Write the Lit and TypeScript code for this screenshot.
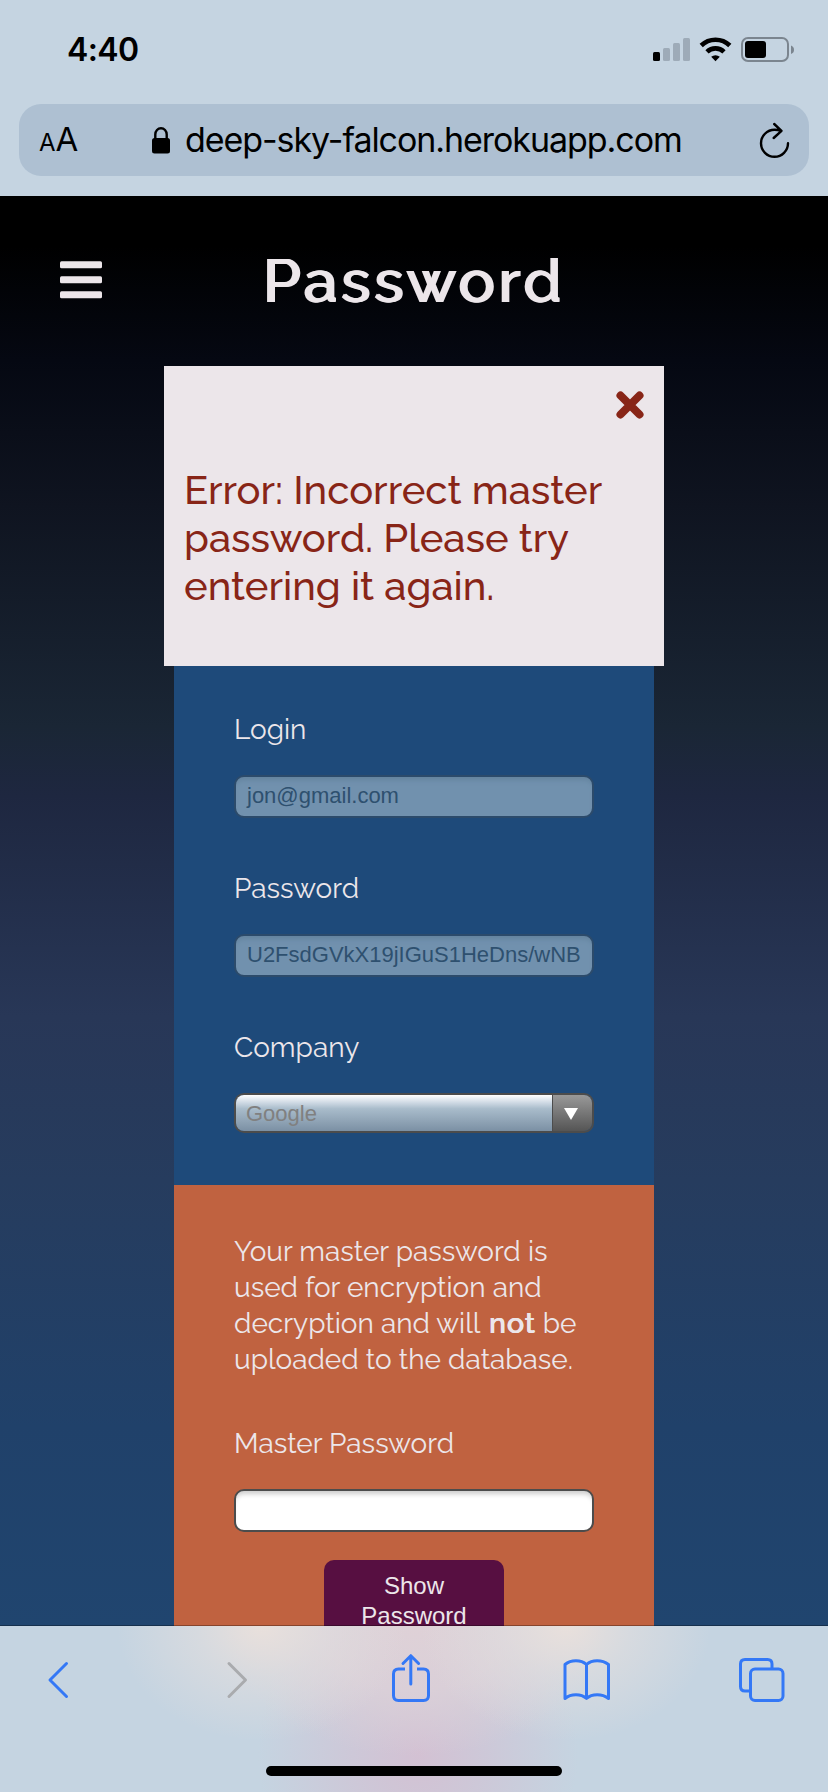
import { LitElement, html, css } from "lit";
import { customElement } from "lit/decorators.js";

@customElement("app-root")
export class AppRoot extends LitElement {
  static styles = css`
    :host { display: flex; flex-direction: column; width: 828px; height: 1792px; overflow: hidden; background: #c5d4e1; }
    * { box-sizing: border-box; }
    svg { display: block; flex: none; }
    .status { height: 104px; flex: none; display: flex; justify-content: space-between; align-items: flex-start; padding: 30px 34px 0 67px; font: 600 32px/40px Inter, "Liberation Sans", sans-serif; letter-spacing: -0.6px; color: #000; }
    .signals { margin-top: 6px; }
    .address { height: 72px; flex: none; margin: 0 19px 20px; border-radius: 22px; background: #aec0d2; display: flex; align-items: center; font-family: Inter, "Liberation Sans", sans-serif; color: #000; padding-left: 20px; }
    .aa { display: flex; align-items: baseline; width: 113px; line-height: 40px; padding-top: 2px; }
    .small { font-size: 24px; }
    .big { font-size: 33px; }
    .url { font-size: 34px; line-height: 40px; letter-spacing: -1.06px; margin-left: 15px; width: 500px; white-space: nowrap; }
    .reload { margin-left: 74px; }
    .page { height: 1430px; flex: none; overflow: hidden; background: linear-gradient(#000 0, #000 50px, #050812 164px, #0f1420 310px, #1a2635 530px, #1e2740 600px, #283757 820px, #263c5e 985px, #20416a 1231px, #20456f 1430px); font-family: Raleway, Lato, "Liberation Sans", sans-serif; color: #ece6ea; display: flex; flex-direction: column; align-items: center; }
    .header { width: 828px; height: 170px; flex: none; display: flex; align-items: flex-start; padding: 65px 0 0 60px; }
    .title { margin: -16px 0 0 160px; font-size: 60px; line-height: 72px; font-weight: 500; letter-spacing: 3.84px; white-space: nowrap; text-shadow: 1.2px 0 currentColor, 2.4px 0 currentColor; }
    .alert { width: 500px; height: 300px; flex: none; background: #ece6ea; color: #882517; padding: 25px 20px 0; display: flex; flex-direction: column; }
    .close { align-self: flex-end; }
    .message { margin-top: 47px; font-size: 40px; line-height: 48px; font-weight: 500; }
    .line { white-space: nowrap; width: max-content; }
    .panel { width: 480px; flex: none; padding: 0 60px; font-size: 28px; line-height: 36px; font-weight: 400; }
    .entry { height: 519px; background: #1e4a7a; padding-top: 46px; }
    .master { height: 600px; background: #c06240; padding-top: 49px; display: flex; flex-direction: column; }
    .field { height: 159px; }
    .box { height: 43px; flex: none; margin-top: 27px; border: 2px solid #4c4c4c; border-radius: 10px; background: #fff; box-shadow: inset 0 6px 5px -3px #ccc; font: 22px/37px "Liberation Sans", Arial, sans-serif; padding-left: 11px; white-space: nowrap; overflow: hidden; }
    .off { background: #7191ae; border-color: #2c4b6b; color: #2e506f; box-shadow: inset 0 6px 5px -3px #64849f; }
    .select { height: 40px; display: flex; margin-top: 27px; border: 2px solid #4c4c4c; border-radius: 10px; overflow: hidden; font: 22px/37px "Liberation Sans", Arial, sans-serif; color: #808080; }
    .value { width: 316px; padding-left: 10px; background: linear-gradient(#fff, #cdd8e3 22%, #a9bccb 38%, #7b90a4); }
    .arrow { width: 40px; border-left: 1px solid #4c4c4c; background: linear-gradient(#999, #555); padding: 13px 0 0 11px; }
    .ml { margin-top: 48px; }
    b { font-weight: 500; letter-spacing: 1.35px; margin-left: 2px; text-shadow: 0.6px 0 currentColor, 1.2px 0 currentColor; }
    .btn { width: 180px; height: 90px; flex: none; align-self: center; margin-top: 28px; border-radius: 10px; background: #570f41; font: 24px/30px "Liberation Sans", Arial, sans-serif; padding-top: 11px; display: flex; flex-direction: column; align-items: center; }
    .tools { height: 166px; flex: none; position: relative; box-shadow: 0 -1px 0 rgba(0,0,0,.3); display: flex; flex-direction: column; justify-content: space-between; align-items: center; padding: 26px 0 16px;
      background:
        radial-gradient(ellipse 145px 115px at 262px 0, rgba(233,224,220,1), rgba(226,222,222,.6) 45%, rgba(220,220,225,0)),
        radial-gradient(ellipse 145px 115px at 566px 0, rgba(233,224,220,1), rgba(226,222,222,.6) 45%, rgba(220,220,225,0)),
        radial-gradient(ellipse 190px 130px at 414px 0, rgba(223,209,215,1), rgba(221,209,216,.8) 50%, rgba(218,210,219,0)),
        radial-gradient(ellipse 160px 180px at 418px 128px, rgba(211,193,211,1), rgba(208,196,213,.7) 45%, rgba(204,203,219,0)),
        #c5d4e1; }
    .icons { width: 828px; height: 52px; padding-left: 46px; display: flex; fill: none; stroke: #3478f6; stroke-width: 3; stroke-linecap: round; stroke-linejoin: round; }
    .fwd { margin-left: 155px; stroke: #a9abae; }
    .share { margin-left: 141px; }
    .book { margin-left: 131px; }
    .tabs { margin-left: 127px; }
    .home { width: 296px; height: 10px; border-radius: 5px; background: #000; }
  `;
  render() {
    return html`
      <div class="status"><span>4:40</span>
        <svg class="signals" width="141" height="27" viewBox="653 36 141 27">
          <rect x="653" y="52" width="7" height="9" rx="1.500"/>
          <g fill="#9eabb8"><rect x="663" y="48" width="7" height="13" rx="1.500"/><rect x="673" y="43" width="7" height="18" rx="1.500"/><rect x="683" y="38" width="7" height="23" rx="1.500"/></g>
          <g fill="none" stroke="#000" stroke-width="4.600"><path d="M701.200 45.500a20.500 20.500 0 0 1 28.600 0"/><path d="M707 51.800a12.200 12.200 0 0 1 17 0"/></g>
          <path d="M711.200 56.800a6.400 6.400 0 0 1 8.600 0l-4.300 4.400z"/>
          <rect x="742" y="38" width="46" height="23" rx="6" fill="none" stroke="#7b858f" stroke-width="2"/>
          <rect x="745" y="41" width="21" height="17" rx="3"/><path d="M791 45.500q3 1.200 3 4.300t-3 4.300z" fill="#7b858f"/>
        </svg></div>
      <div class="address"><div class="aa"><span class="small">A</span><span class="big">A</span></div>
        <svg width="18" height="27" viewBox="0 0 18 27"><rect y="11" width="18" height="15.500" rx="2.500"/><path d="M3.300 12V7.500a5.700 6.300 0 0 1 11.400 0V12" fill="none" stroke="#000" stroke-width="2.400"/></svg>
        <span class="url">deep-sky-falcon.herokuapp.com</span>
        <svg class="reload" width="32" height="38" viewBox="759 121 32 38" fill="none" stroke="#000" stroke-width="2.400" stroke-linecap="round" stroke-linejoin="round"><path d="M788 143.300A13.500 13.500 0 1 1 774.500 129.800Q778 129.800 781 130.800M774.200 124l7.300 6.800-7.800 7.200"/></svg></div>
      <div class="page">
        <div class="header"><svg width="42" height="38" fill="#ece6ea"><rect y=".3" width="42" height="7" rx="1.500"/><rect y="15.300" width="42" height="7" rx="1.500"/><rect y="30.300" width="42" height="7" rx="1.500"/></svg><div class="title">Password</div></div>
        <div class="alert"><svg class="close" width="28" height="28" stroke="#882517" stroke-width="8" stroke-linecap="round"><path d="M4.500 4.500L23.500 23.500M23.500 4.500L4.500 23.500"/></svg>
          <div class="message"><div class="line">Error: Incorrect master</div><div class="line">password. Please try</div><div class="line">entering it again.</div></div></div>
        <div class="panel entry">
          <div class="field"><div class="line">Login</div><div class="box off">jon@gmail.com</div></div>
          <div class="field"><div class="line">Password</div><div class="box off">U2FsdGVkX19jIGuS1HeDns/wNB</div></div>
          <div class="field"><div class="line">Company</div><div class="select"><div class="value">Google</div><div class="arrow"><svg width="14" height="12"><path d="M0 0H14L7 12Z" fill="#fff"/></svg></div></div></div>
        </div>
        <div class="panel master">
          <div class="line">Your master password is</div><div class="line">used for encryption and</div><div class="line">decryption and will <b>not</b> be</div><div class="line">uploaded to the database.</div>
          <div class="line ml">Master Password</div><div class="box"></div>
          <div class="btn"><span>Show</span><span>Password</span></div>
        </div>
      </div>
      <div class="tools">
        <div class="icons">
          <svg width="24" height="52" viewBox="46 1652 24 52"><path d="M66.500 1663.500L50 1680L66.500 1696.500"/></svg>
          <svg class="fwd" width="24" height="52" viewBox="225 1652 24 52"><path d="M229 1663.500L245.500 1680L229 1696.500"/></svg>
          <svg class="share" width="42" height="52" viewBox="390 1652 42 52"><path stroke-linecap="butt" d="M405 1669H398.500Q393.500 1669 393.500 1674V1695.500Q393.500 1700.500 398.500 1700.500H423.500Q428.500 1700.500 428.500 1695.500V1674Q428.500 1669 423.500 1669H417"/><path d="M410.800 1684V1656M403 1663.500L410.800 1655.700L418.600 1663.500"/></svg>
          <svg class="book" width="48" height="52" viewBox="563 1652 48 52"><path d="M586.500 1698V1664.500C581 1659.500 571 1659.500 565 1664.500V1698.500C571 1693.500 581 1693.500 586.500 1698.500C592 1693.500 602 1693.500 608.500 1698.500V1664.500C602 1659.500 592 1659.500 586.500 1664.500"/></svg>
          <svg class="tabs" width="48" height="52" viewBox="738 1652 48 52"><rect x="750.500" y="1669" width="32.500" height="31.500" rx="4.500"/><path stroke-linecap="butt" d="M750 1691H745Q740.500 1691 740.500 1686.500V1664Q740.500 1659.500 745 1659.500H767.500Q772 1659.500 772 1664V1668"/></svg>
        </div>
        <div class="home"></div>
      </div>`;
  }
}
